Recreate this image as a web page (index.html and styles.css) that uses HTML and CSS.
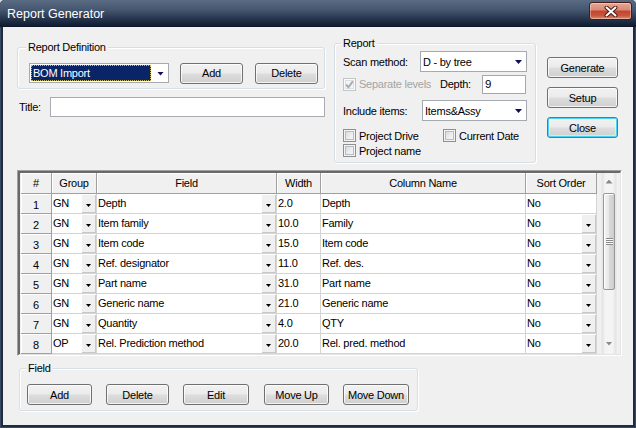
FILE: index.html
```html
<!DOCTYPE html>
<html>
<head>
<meta charset="utf-8">
<title>Report Generator</title>
<link rel="stylesheet" href="styles.css">
</head>
<body>
<div class="window">
  <div class="titlebar">
    <span class="title">Report Generator</span>
    <div class="close-btn">
      <svg width="14" height="11" viewBox="0 0 14 11"><path d="M2.5 1.5 L11.5 9.5 M11.5 1.5 L2.5 9.5" stroke="#4a1a12" stroke-width="4" stroke-linecap="round"/><path d="M2.5 1.5 L11.5 9.5 M11.5 1.5 L2.5 9.5" stroke="#fff" stroke-width="2" stroke-linecap="round"/></svg>
    </div>
  </div>
  <div class="client">
    <div class="top-row">
      <div class="left-col">
        <div class="group def-group">
          <div class="group-title">Report Definition</div>
          <div class="def-row">
            <div class="combo combo-def"><span class="combo-sel">BOM Import</span><span class="arrow"></span></div>
            <div class="btn btn-def-add">Add</div>
            <div class="btn btn-def-del">Delete</div>
          </div>
        </div>
        <div class="title-row">
          <span class="lbl-title">Title:</span>
          <div class="textbox title-input"></div>
        </div>
      </div>
      <div class="group report-group">
        <div class="group-title">Report</div>
        <div class="rg-row row-scan">
          <span class="lbl-scan">Scan method:</span>
          <div class="combo combo-scan"><span class="combo-text">D - by tree</span><span class="arrow"></span></div>
        </div>
        <div class="rg-row row-levels">
          <div class="chk-item chk-levels"><span class="check check-disabled"><svg width="11" height="11" viewBox="0 0 11 11"><path d="M2.2 5.6 L4.4 8.2 L8.8 2.4" fill="none" stroke="#a3a9b0" stroke-width="1.8"/></svg></span><span class="chk-label disabled-text">Separate levels</span></div>
          <span class="lbl-depth">Depth:</span>
          <div class="textbox depth-input">9</div>
        </div>
        <div class="rg-row row-include">
          <span class="lbl-include">Include items:</span>
          <div class="combo combo-include"><span class="combo-text">Items&amp;Assy</span><span class="arrow"></span></div>
        </div>
        <div class="rg-row row-chk1">
          <div class="chk-item chk-drive"><span class="check"></span><span class="chk-label">Project Drive</span></div>
          <div class="chk-item"><span class="check"></span><span class="chk-label">Current Date</span></div>
        </div>
        <div class="rg-row row-chk2">
          <div class="chk-item"><span class="check"></span><span class="chk-label">Project name</span></div>
        </div>
      </div>
      <div class="btn-col">
        <div class="btn side-btn">Generate</div>
        <div class="btn side-btn">Setup</div>
        <div class="btn side-btn btn-default">Close</div>
      </div>
    </div>

    <div class="grid-frame">
      <div class="grid-inner">
        <div class="grid">
          <div class="hcell">#</div>
          <div class="hcell">Group</div>
          <div class="hcell">Field</div>
          <div class="hcell">Width</div>
          <div class="hcell">Column Name</div>
          <div class="hcell">Sort Order</div>

          <div class="rcell">1</div>
          <div class="cell"><span class="t">GN</span><span class="dd"></span></div>
          <div class="cell"><span class="t">Depth</span><span class="dd"></span></div>
          <div class="cell"><span class="t">2.0</span></div>
          <div class="cell"><span class="t">Depth</span></div>
          <div class="cell"><span class="t">No</span></div>

          <div class="rcell">2</div>
          <div class="cell"><span class="t">GN</span><span class="dd"></span></div>
          <div class="cell"><span class="t">Item family</span><span class="dd"></span></div>
          <div class="cell"><span class="t">10.0</span></div>
          <div class="cell"><span class="t">Family</span></div>
          <div class="cell"><span class="t">No</span><span class="dd"></span></div>

          <div class="rcell">3</div>
          <div class="cell"><span class="t">GN</span><span class="dd"></span></div>
          <div class="cell"><span class="t">Item code</span><span class="dd"></span></div>
          <div class="cell"><span class="t">15.0</span></div>
          <div class="cell"><span class="t">Item code</span></div>
          <div class="cell"><span class="t">No</span><span class="dd"></span></div>

          <div class="rcell">4</div>
          <div class="cell"><span class="t">GN</span><span class="dd"></span></div>
          <div class="cell"><span class="t">Ref. designator</span><span class="dd"></span></div>
          <div class="cell"><span class="t">11.0</span></div>
          <div class="cell"><span class="t">Ref. des.</span></div>
          <div class="cell"><span class="t">No</span><span class="dd"></span></div>

          <div class="rcell">5</div>
          <div class="cell"><span class="t">GN</span><span class="dd"></span></div>
          <div class="cell"><span class="t">Part name</span><span class="dd"></span></div>
          <div class="cell"><span class="t">31.0</span></div>
          <div class="cell"><span class="t">Part name</span></div>
          <div class="cell"><span class="t">No</span><span class="dd"></span></div>

          <div class="rcell">6</div>
          <div class="cell"><span class="t">GN</span><span class="dd"></span></div>
          <div class="cell"><span class="t">Generic name</span><span class="dd"></span></div>
          <div class="cell"><span class="t">21.0</span></div>
          <div class="cell"><span class="t">Generic name</span></div>
          <div class="cell"><span class="t">No</span><span class="dd"></span></div>

          <div class="rcell">7</div>
          <div class="cell"><span class="t">GN</span><span class="dd"></span></div>
          <div class="cell"><span class="t">Quantity</span><span class="dd"></span></div>
          <div class="cell"><span class="t">4.0</span></div>
          <div class="cell"><span class="t">QTY</span></div>
          <div class="cell"><span class="t">No</span><span class="dd"></span></div>

          <div class="rcell">8</div>
          <div class="cell"><span class="t">OP</span><span class="dd"></span></div>
          <div class="cell"><span class="t">Rel. Prediction method</span><span class="dd"></span></div>
          <div class="cell"><span class="t">20.0</span></div>
          <div class="cell"><span class="t">Rel. pred. method</span></div>
          <div class="cell"><span class="t">No</span><span class="dd"></span></div>
        </div>
        <div class="vscroll">
          <div class="sb-btn"><span class="sb-arrow up"></span></div>
          <div class="sb-thumb"><span class="grip"></span></div>
          <div class="sb-btn sb-down"><span class="sb-arrow down"></span></div>
        </div>
      </div>
    </div>

    <div class="group field-group">
      <div class="group-title">Field</div>
      <div class="field-row">
        <div class="btn fb-add">Add</div>
        <div class="btn fb-del">Delete</div>
        <div class="btn fb-edit">Edit</div>
        <div class="btn fb-up">Move Up</div>
        <div class="btn fb-down">Move Down</div>
      </div>
    </div>
  </div>
</div>
</body>
</html>
```

FILE: styles.css
```css
* { box-sizing: border-box; }
html, body { margin: 0; padding: 0; }
body {
  width: 636px;
  height: 428px;
  overflow: hidden;
  background: #d8dde3;
  font-family: "Liberation Sans", Arial, sans-serif;
  font-size: 11px;
  letter-spacing: -0.25px;
  color: #000;
}
.window {
  width: 636px;
  height: 428px;
  display: flex;
  flex-direction: column;
  background: #1f2c40;
  border-radius: 5px 5px 0 0;
  box-shadow: inset 1px 0 0 #3a4a60, inset -1px 0 0 #3a4a60, inset 0 -1px 0 #3a4a60;
}
.titlebar {
  height: 27px;
  flex: none;
  display: flex;
  align-items: flex-start;
  background: linear-gradient(#5a6c83 0%, #46586f 35%, #26354d 70%, #0c172b 100%);
  border-radius: 5px 5px 0 0;
}
.title {
  color: #fff;
  font-size: 12.5px;
  letter-spacing: 0;
  line-height: 15px;
  margin: 7px 0 0 7px;
}
.close-btn {
  margin: 2px 4px 0 auto;
  width: 43px;
  height: 18px;
  border: 1px solid #4a1c16;
  border-radius: 3px;
  background: linear-gradient(#e7a796 0%, #d88a77 42%, #c4452e 52%, #c8553d 78%, #df8a6c 100%);
  box-shadow: inset 0 0 0 1px rgba(255,255,255,0.35);
  display: flex;
  align-items: center;
  justify-content: center;
}
.client {
  flex: 1;
  margin: 0 3px 3px 3px;
  background: #f0f0f0;
  padding-top: 9px;
}

/* group boxes */
.group {
  border: 1px solid #d5dfe5;
  border-radius: 3px;
  box-shadow: inset 1px 1px 0 #fff, 1px 1px 0 #fff;
}
.group-title {
  width: max-content;
  margin-top: -7px;
  padding: 0 2px;
  line-height: 13px;
  background: #f0f0f0;
}

/* top */
.top-row { display: flex; align-items: flex-start; }
.left-col { margin-left: 14px; width: 308px; margin-top: 11px; }
.def-group { width: 308px; padding-bottom: 5px; }
.def-group .group-title { margin-left: 8px; }
.def-row { display: flex; align-items: center; margin-top: 9px; height: 20px; padding-left: 11px; }
.btn-def-add { margin-left: 11px; width: 63px; }
.btn-def-del { margin-left: 12px; width: 63px; }

.title-row { display: flex; align-items: center; margin-top: 8px; height: 20px; }
.lbl-title { margin-left: 2px; width: 31px; }
.title-input { width: 275px; height: 20px; }

.textbox {
  background: #fff;
  border: 1px solid #abadb3;
}
.title-input { border-color: #a9abb1; }
.depth-input {
  width: 44px;
  height: 19px;
  padding-left: 2px;
  line-height: 17px;
  font-size: 11.5px;
  border-color: #a5a7ad;
}

.combo {
  display: flex;
  align-items: center;
  height: 20px;
  background: #fff;
  border: 1px solid #a5a9b0;
  padding: 0 4px 0 1px;
}
.combo-text { flex: 1; padding-left: 1px; white-space: nowrap; }
.combo-def { width: 140px; padding-left: 1px; }
.combo-sel {
  width: 120px;
  height: 16px;
  line-height: 14px;
  padding-left: 1px;
  background: #0a2468;
  color: #fff;
  border: 1px dotted #c8b860;
  margin-right: auto;
}
.arrow {
  width: 7px;
  height: 4px;
  margin-top: 1px;
  background: #0e0e5c;
  clip-path: polygon(0 0, 100% 0, 50% 100%);
}

.report-group { margin-left: 9px; margin-top: 7px; width: 202px; padding: 0 0 5px 8px; }
.report-group .group-title { margin-left: -2px; }
.rg-row { display: flex; align-items: center; }
.row-scan { margin-top: 1px; height: 21px; }
.lbl-scan { width: 77px; }
.combo-scan { width: 107px; height: 21px; }
.row-levels { margin-top: 2px; height: 20px; }
.chk-levels { width: 97px; }
.lbl-depth { width: 42px; }
.row-include { margin-top: 6px; height: 21px; }
.lbl-include { width: 79px; }
.combo-include { width: 105px; height: 21px; }
.row-chk1 { margin-top: 8px; height: 13px; }
.row-chk2 { margin-top: 2px; height: 13px; }
.chk-drive { width: 100px; }

.chk-item { display: flex; align-items: center; height: 13px; }
.check {
  width: 13px;
  height: 13px;
  flex: none;
  border: 1px solid #8e8f8f;
  background: linear-gradient(135deg, #d2d4d8 0%, #f0f0f2 60%, #fafafa 100%);
  box-shadow: inset 0 0 0 1px #f4f4f4, inset 0 0 0 2px #b8bcc2;
  display: flex;
  align-items: center;
  justify-content: center;
}
.check-disabled {
  border-color: #c2c4c6;
  background: #f4f4f4;
  box-shadow: inset 0 0 0 1px #fafafa, inset 0 0 0 2px #dcdee2;
}
.chk-label { margin-left: 3px; white-space: nowrap; }
.disabled-text { color: #a3a3a3; }

.btn-col { margin-left: 11px; margin-top: 21px; width: 71px; display: flex; flex-direction: column; gap: 9px; }

.btn {
  height: 21px;
  display: flex;
  align-items: center;
  justify-content: center;
  border: 1px solid #707070;
  border-radius: 3px;
  background: linear-gradient(#f2f2f2 0%, #ebebeb 48%, #dddddd 52%, #cfcfcf 100%);
  box-shadow: inset 0 0 0 1px rgba(255,255,255,0.75);
  white-space: nowrap;
}
.side-btn { width: 71px; }
.btn-default {
  border-color: #3c7fb1;
  box-shadow: inset 0 0 0 1px #48d4f5, inset 0 0 0 2px rgba(255,255,255,0.4);
}

/* grid */
.grid-frame {
  margin: 7px 0 0 14px;
  width: 605px;
  height: 186px;
  border: 1px solid;
  border-color: #a0a0a0 #ffffff #ffffff #a0a0a0;
}
.grid-inner {
  height: 100%;
  border-style: solid;
  border-width: 2px 1px 1px 2px;
  border-color: #696969 #e3e3e3 #e3e3e3 #696969;
  display: flex;
  align-items: flex-start;
  background: #f0f0f0;
}
.grid {
  margin-left: 1px;
  width: 576px;
  display: grid;
  grid-template-columns: 31px 45px 180px 44px 205px 71px;
  grid-template-rows: 21px repeat(8, 20px);
}
.hcell, .rcell {
  background: #f0f0f0;
  border-right: 1px solid #a0a0a0;
  border-bottom: 1px solid #a0a0a0;
  box-shadow: inset 1px 1px 0 #fff;
  text-align: center;
  white-space: nowrap;
}
.hcell { line-height: 20px; }
.rcell { line-height: 20px; padding-top: 1px; }
.cell {
  display: flex;
  background: #fff;
  border-right: 1px solid #d4d4d4;
  border-bottom: 1px solid #d4d4d4;
  line-height: 18px;
  white-space: nowrap;
  overflow: hidden;
}
.cell .t { flex: 1; padding-left: 1px; overflow: hidden; }
.dd {
  width: 15px;
  flex: none;
  background: #f0f0f0;
  box-shadow: inset 1px 1px 0 #fff, inset -1px -1px 0 #c8c8c8;
  display: flex;
  align-items: center;
  justify-content: center;
}
.dd::after {
  content: "";
  width: 5px;
  height: 3px;
  margin-top: 4px;
  background: #000;
  clip-path: polygon(0 0, 100% 0, 50% 100%);
}

.vscroll {
  margin-left: 4px;
  width: 16px;
  height: 181px;
  display: flex;
  flex-direction: column;
  background: linear-gradient(90deg, #e3e3e3 0%, #f4f4f4 25%, #f4f4f4 75%, #e3e3e3 100%);
  border-left: 1px solid #eaeaea;
  border-right: 1px solid #eaeaea;
}
.sb-btn {
  height: 17px;
  flex: none;
  display: flex;
  align-items: center;
  justify-content: center;
}
.sb-down { margin-top: auto; margin-bottom: 2px; }
.sb-arrow {
  width: 7px;
  height: 4px;
  background: #8a8a8a;
}
.sb-arrow.up { clip-path: polygon(50% 0, 100% 100%, 0 100%); }
.sb-arrow.down { clip-path: polygon(0 0, 100% 0, 50% 100%); }
.sb-thumb {
  margin: 3px 1px 0 1px;
  height: 97px;
  border: 1px solid #979797;
  border-radius: 2px;
  background: linear-gradient(90deg, #f3f3f3 0%, #e9e9e9 45%, #d9d9d9 55%, #cdcdcd 100%);
  box-shadow: inset 1px 1px 0 #fff;
  display: flex;
  align-items: center;
  justify-content: center;
}
.grip {
  width: 7px;
  height: 7px;
  background: repeating-linear-gradient(#8a8a8a 0 1px, #fafafa 1px 2px);
}

/* field group */
.field-group { margin: 12px 0 0 16px; width: 399px; padding: 0 0 5px 7px; }
.field-group .group-title { margin-left: -1px; }
.field-row { display: flex; margin-top: 9px; }
.fb-add { width: 65px; }
.fb-del { width: 63px; margin-left: 14px; }
.fb-edit { width: 66px; margin-left: 14px; }
.fb-up { width: 65px; margin-left: 15px; }
.fb-down { width: 66px; margin-left: 14px; }
```
